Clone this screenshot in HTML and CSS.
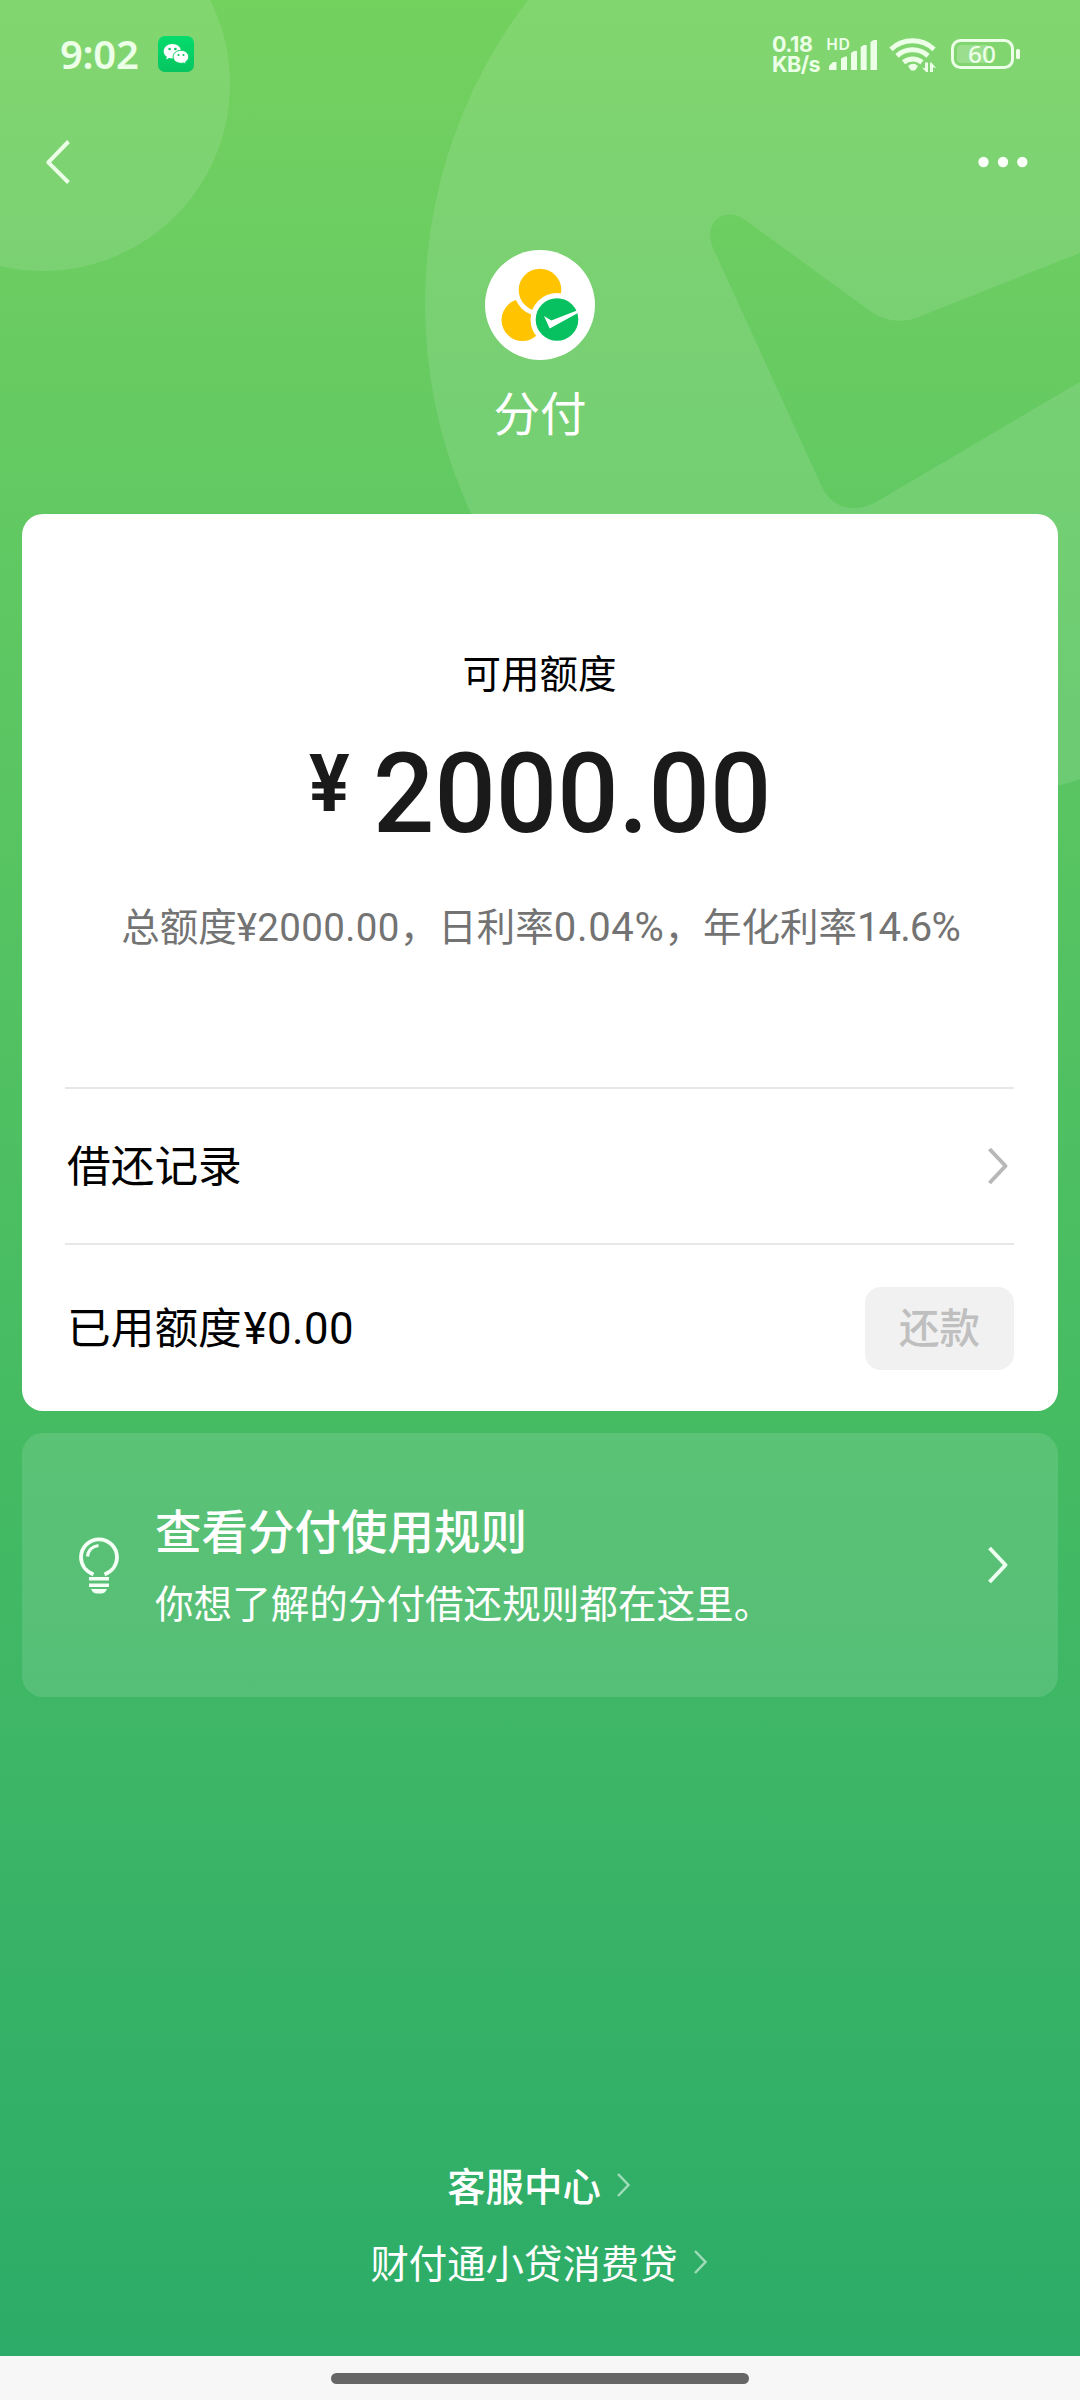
FILE: index.html
```html
<!DOCTYPE html>
<html lang="zh-CN">
<head>
<meta charset="utf-8">
<title>分付</title>
<link rel="stylesheet" href="styles.css">
</head>
<body>
<div class="screen">
  <svg class="backdrop" width="1080" height="800" viewBox="0 0 1080 800" aria-hidden="true">
    <defs>
      <mask id="tick">
        <rect width="1080" height="810" fill="#fff"/>
        <path d="M1090 249 L921 316 Q896 327 873 313 L745 220 C725 205 702 223 713 248 L822 487 C831 508 855 514 876 502 L1090 376 Z" fill="#000"/>
      </mask>
    </defs>
    <circle cx="43" cy="84" r="187" fill="#fff" fill-opacity=".11"/>
    <circle cx="925" cy="304" r="500" fill="#fff" fill-opacity=".11" mask="url(#tick)"/>
  </svg>

  <header class="status">
    <div class="status-left">
      <span class="clock">9:02</span>
      <svg class="wechat" width="36" height="36" viewBox="0 0 36 36">
        <defs><linearGradient id="wx" x1="0" y1="0" x2="0" y2="1"><stop offset="0" stop-color="#05dc6c"/><stop offset="1" stop-color="#06c560"/></linearGradient></defs>
        <rect width="36" height="36" rx="7" fill="url(#wx)"/>
        <path d="M14.4 8C9.500 8 5.700 11.200 5.700 15.200c0 2.300 1.200 4.300 3.200 5.600l-.8 2.600 3-1.500c1 .3 2.100.5 3.200.5 4.900 0 8.800-3.200 8.800-7.200S19.300 8 14.400 8z" fill="#fff"/>
        <path d="M23 14.300c-4.400 0-7.900 2.900-7.900 6.500s3.500 6.500 7.900 6.500c.9 0 1.800-.1 2.600-.4l2.600 1.400-.7-2.300c1.900-1.200 3.200-3.100 3.200-5.200 0-3.600-3.400-6.500-7.700-6.500z" fill="#fff" stroke="#06cf66" stroke-width="1"/>
        <g fill="#0ac463"><circle cx="11.600" cy="13" r="1.300"/><circle cx="17.400" cy="13" r="1.300"/><circle cx="20.500" cy="19" r="1.100"/><circle cx="25.500" cy="19" r="1.100"/></g>
      </svg>
    </div>
    <div class="status-right">
      <div class="speed">0.18<br>KB/s</div>
      <svg class="signal" width="54" height="36" viewBox="826 36 54 36">
        <text class="hd" x="826" y="50" textLength="24" lengthAdjust="spacingAndGlyphs">HD</text>
        <path d="M829 70v-4l4-4h3.500v8zM841 70V58.500l4-2h2v13.500zM851 70V53l3-2h3v19zM860.700 70V47l3-2h3v25zM870.500 70V42l3-2h3.500v30z"/>
      </svg>
      <svg class="wifi" width="48" height="36" viewBox="889 36 48 36">
        <g fill="none" stroke="#ecffe7" stroke-width="5">
          <path d="M891 49.300a31.500 31.500 0 0 1 43 0"/>
          <path d="M897 55.800a23 23 0 0 1 31 0"/>
          <path d="M903.500 62.300a14.500 14.500 0 0 1 18.500 0"/>
        </g>
        <path d="M908 66q5-4.500 10 0l-3 4.500h-4z"/>
        <path d="M925 62.500h3V72h-2l-4-4.500 3 .8zM930 72v-9.500h1.500l4.500 5.500-3-.8V72z"/>
      </svg>
      <svg class="battery" width="72" height="34" viewBox="950 37 72 34">
        <rect x="952.500" y="40.500" width="60" height="27" rx="8" fill="none" stroke="#ecffe7" stroke-width="3"/>
        <path d="M961 45h27v18h-27a4 4 0 0 1-4-4v-10a4 4 0 0 1 4-4z" fill-opacity=".25"/>
        <rect x="1016" y="49" width="4" height="10" rx="1.500"/>
        <text class="level" x="968" y="63" textLength="28" lengthAdjust="spacingAndGlyphs">60</text>
      </svg>
    </div>
  </header>

  <nav class="navbar">
    <svg width="28" height="48" viewBox="44 138 28 48"><path d="M68.500 141.500 48.300 162.300 68.500 182.500" fill="none" stroke="#ecffe7" stroke-width="4" stroke-linejoin="round"/></svg>
    <svg width="50" height="12" viewBox="978 156 50 12" fill="#fbfffa"><circle cx="983.500" cy="162" r="5.200"/><circle cx="1003" cy="162" r="5.200"/><circle cx="1022.300" cy="162" r="5.200"/></svg>
  </nav>

  <section class="brand">
    <svg width="110" height="110" viewBox="485 250 110 110">
      <circle cx="540" cy="305" r="55" fill="#fff"/>
      <circle cx="522.500" cy="320" r="21" fill="#ffc300"/>
      <circle cx="540" cy="290" r="26" fill="#fff"/>
      <circle cx="540" cy="290" r="21.300" fill="#ffc300"/>
      <circle cx="557" cy="319.500" r="26.500" fill="#fff"/>
      <circle cx="557" cy="319.500" r="21.300" fill="#07c160"/>
      <path d="M544 316l7.300 4.600L577 310.500v3L549.700 328.500z" fill="#fff"/>
    </svg>
    <h1 class="brand-name">分付</h1>
  </section>

  <main class="cards">
    <section class="card">
      <div class="quota">
        <div class="quota-label">可用额度</div>
        <div class="amount"><span class="yen">¥</span><span class="digits">2000.00</span></div>
        <p class="terms">总额度<span class="num num-money">¥2000.00</span>，日利率<span class="num num-rate">0.04%</span>，年化利率<span class="num num-year">14.6%</span></p>
      </div>
      <div class="row row-records">
        <span>借还记录</span>
        <svg class="chevron" width="22" height="40" viewBox="0 0 22 40"><path d="M2.500 3 18.500 20 2.500 37" fill="none" stroke="#b8b8b8" stroke-width="4" stroke-linejoin="round"/></svg>
      </div>
      <div class="row row-used">
        <span>已用额度<span class="num used">¥0.00</span></span>
        <button class="repay" disabled>还款</button>
      </div>
    </section>

    <section class="rules">
      <svg class="bulb" width="42" height="58" viewBox="0 0 42 58" fill="none" stroke="#f4fff6" stroke-width="3.800">
        <path d="M15.500 38.500C8 35.500 3 29 3 21.300a18 18 0 0 1 36 0C39 29 34 35.500 26.500 38.500"/>
        <path d="M9.500 20.500Q10.500 11 20.500 9.500" stroke-width="3.200"/>
        <path d="M11 42.700h20M11 49.300h20" stroke-width="3.600"/>
        <path d="M13 53h16q-2 4.500-6 4.500h-4q-4 0-6-4.500z" fill="#f4fff6" stroke="none"/>
      </svg>
      <div class="rules-text">
        <h2>查看分付使用规则</h2>
        <p>你想了解的分付借还规则都在这里。</p>
      </div>
      <svg class="chevron" width="22" height="40" viewBox="0 0 22 40"><path d="M2.500 3 18.500 20 2.500 37" fill="none" stroke="#ecfff0" stroke-width="4" stroke-linejoin="round"/></svg>
    </section>
  </main>

  <footer class="links">
    <a class="link link-service">客服中心<svg width="16" height="26" viewBox="0 0 16 26"><path d="M2 2 12.500 13 2 24"/></svg></a>
    <a class="link">财付通小贷消费贷<svg width="16" height="26" viewBox="0 0 16 26"><path d="M2 2 12.500 13 2 24"/></svg></a>
  </footer>

  <div class="gesture"><div class="gesture-bar"></div></div>
</div>
</body>
</html>
```
FILE: styles.css
```css
* { box-sizing: border-box; margin: 0; padding: 0; }

body {
  width: 1080px;
  font-family: "Noto Sans CJK SC", sans-serif;
  color: #000;
}

.screen {
  position: relative;
  display: flex;
  flex-direction: column;
  width: 1080px;
  height: 2400px;
  overflow: hidden;
  background: linear-gradient(180deg, #73d15e 0, #6acc62 300px, #62c962 514px, #45bb62 1420px, #3db666 1750px, #2cac68 2356px);
}

.backdrop { position: absolute; left: 0; top: 0; }
.screen > :not(.backdrop) { position: relative; }

.status {
  display: flex;
  justify-content: space-between;
  height: 108px;
  padding: 36px 58px 0 60px;
  color: #ecffe7;
  fill: #ecffe7;
}
.status svg { overflow: visible; }
.status-left, .status-right { display: flex; height: 36px; }
.clock {
  width: 98px;
  font: 600 40px/36px "Noto Sans", sans-serif;
  letter-spacing: -0.3px;
}
.speed {
  width: 54px;
  margin-top: -1px;
  font: 700 21.500px/19.500px Inter, sans-serif;
  letter-spacing: -0.5px;
}
.signal { margin-right: 9px; }
.wifi { margin-right: 13px; }
.battery { margin-top: 1px; }
.hd { font: 600 16px "Noto Sans", sans-serif; }
.level { font: 500 24px "Noto Sans", sans-serif; }

.navbar {
  display: flex;
  align-items: center;
  justify-content: space-between;
  height: 108px;
  padding: 0 52px 0 44px;
}

.brand {
  display: flex;
  flex-direction: column;
  align-items: center;
  height: 298px;
  padding-top: 34px;
}
.brand-name {
  margin-top: 17px;
  font-size: 46.500px;
  font-weight: 400;
  line-height: 68px;
  color: #fff;
}

.cards {
  display: flex;
  flex-direction: column;
  gap: 22px;
  padding: 0 22px;
}
.card {
  height: 897px;
  padding: 0 44px 0 43px;
  border-radius: 21px;
  background: #fff;
}
.quota {
  display: flex;
  flex-direction: column;
  align-items: center;
  height: 573px;
  padding-top: 129px;
}
.quota-label { font-size: 38.500px; line-height: 56px; }
.amount {
  display: flex;
  width: 470px;
  height: 130px;
  margin-top: 30px;
  padding-left: 4px;
  font-family: Roboto, sans-serif;
  font-weight: 500;
  color: #1a1a1a;
}
.yen, .digits { flex-shrink: 0; transform-origin: 0 0; }
.yen {
  width: 64px;
  padding-top: 7px;
  font-size: 79px;
  line-height: 96px;
  font-weight: 700;
  transform: scaleX(.96);
}
.digits { font-size: 111px; line-height: 130px; transform: scaleX(.973); }
.terms {
  margin: 37px 0 0 2px;
  font-size: 38.500px;
  line-height: 56px;
  white-space: nowrap;
  color: #737373;
}
.num { font-family: Roboto, sans-serif; }
.num-money { letter-spacing: .35px; }
.num-rate, .num-year { font-size: 40px; }
.num-rate { letter-spacing: .7px; }
.num-year { letter-spacing: -.9px; }

.row {
  display: flex;
  align-items: center;
  justify-content: space-between;
  border-top: 2px solid #e7e7e7;
  font-size: 43.700px;
}
.row > span { padding-bottom: 7px; }
.row-records { height: 156px; padding: 0 5px 0 2px; }
.row-used { height: 168px; padding-left: 2px; }
.used { margin-left: 2px; letter-spacing: .4px; }
.repay {
  width: 149px;
  height: 83px;
  padding-bottom: 4px;
  border: 0;
  border-radius: 16px;
  background: #f1f1f1;
  color: #bfbfbf;
  font: 500 40.500px/76px "Noto Sans CJK SC", sans-serif;
}

.rules {
  display: flex;
  align-items: center;
  height: 264px;
  padding: 0 49px 0 56px;
  border-radius: 21px;
  background: rgba(255, 255, 255, .12);
  color: #fff;
}
.bulb { margin-bottom: 1px; }
.rules-text { flex: 1; margin-left: 35px; padding-bottom: 5px; }
.rules h2 { font-size: 46.500px; font-weight: 500; line-height: 76px; }
.rules p { font-size: 38.600px; line-height: 68px; }

.links {
  display: flex;
  flex: 1;
  flex-direction: column;
  align-items: center;
  justify-content: flex-end;
  padding-bottom: 56px;
  color: #fff;
}
.link {
  display: flex;
  align-items: center;
  gap: 15px;
  height: 77px;
  padding-right: 1px;
  font-size: 38.400px;
  line-height: 73px;
}
.link-service { font-weight: 500; }
.link path { fill: none; stroke: #9fdcb9; stroke-width: 2.500; }

.gesture {
  display: flex;
  justify-content: center;
  height: 44px;
  padding-top: 17px;
  background: #f7f7f7;
}
.gesture-bar { width: 418px; height: 11px; border-radius: 6px; background: #666; }
```
